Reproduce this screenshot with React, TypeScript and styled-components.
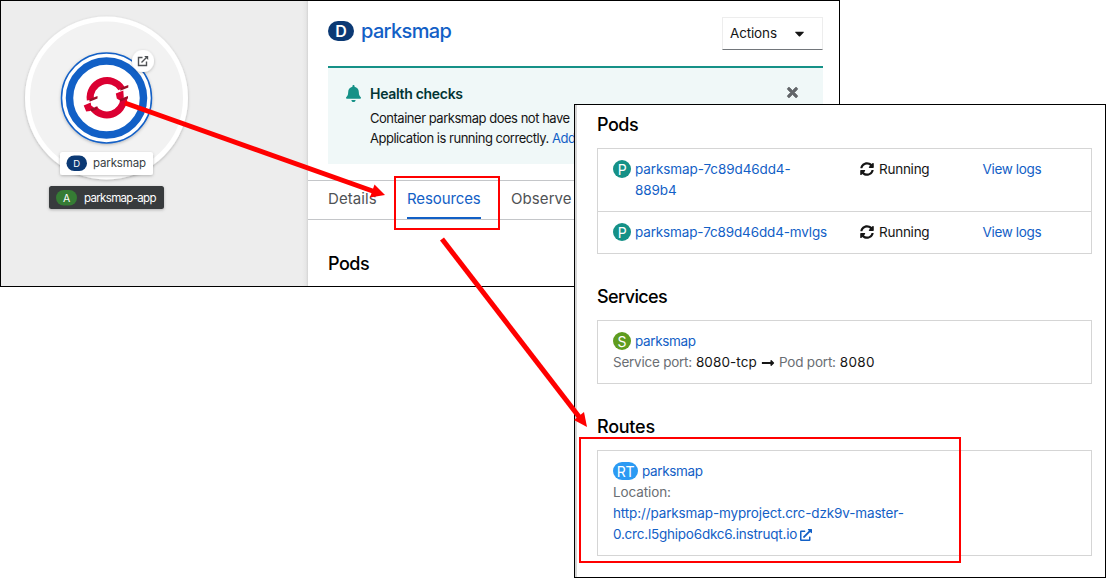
import React from 'react';
import styled, { createGlobalStyle } from 'styled-components';
import { FaBell, FaTimes, FaCaretDown, FaSyncAlt, FaLongArrowAltRight, FaExternalLinkAlt } from 'react-icons/fa';

const Global = createGlobalStyle`
  * { box-sizing: border-box; }
  body { margin: 0; background: #fff; overflow: hidden; }
  body, button { font-family: Inter, "Open Sans", "Liberation Sans", sans-serif; font-size: 13.5px; color: #151515; }
  a { color: #1260c6; text-decoration: none; }
`;

const Canvas = styled.main`
  position: relative;
  width: 1106px;
  height: 578px;
`;

const Window = styled.section<{ $x: number; $y: number; $w: number; $h: number }>`
  position: absolute;
  left: ${p => p.$x}px;
  top: ${p => p.$y}px;
  width: ${p => p.$w}px;
  height: ${p => p.$h}px;
  border: 1px solid #000;
  background: #fff;
  overflow: hidden;
  display: flex;
`;

const Topology = styled.div`
  flex: 0 0 307px;
  background: linear-gradient(to left, #d4d4d4 0, #e6e6e6 2px, #ededed 6px);
  display: flex;
`;

const Graph = styled.svg`
  display: block;
`;

const SidePanel = styled.div`
  flex: 1;
  display: flex;
  flex-direction: column;
  min-width: 0;
`;

const PanelHeader = styled.header`
  height: 65px;
  padding: 16px 16px 0 20px;
  display: flex;
  justify-content: space-between;
  align-items: flex-start;
`;

const PanelTitle = styled.h1`
  margin: 0;
  display: flex;
  align-items: center;
  gap: 7px;
  height: 28px;
  font-size: 20px;
  font-weight: 500;
  letter-spacing: -0.65px;
  color: #1260c6;
`;

const Kind = styled.span<{ $bg: string; $w: number; $h: number; $size: number; $bold?: boolean }>`
  flex: none;
  display: inline-flex;
  align-items: center;
  justify-content: center;
  width: ${p => p.$w}px;
  height: ${p => p.$h}px;
  border-radius: ${p => p.$h / 2}px;
  background: ${p => p.$bg};
  color: #fff;
  font-size: ${p => p.$size}px;
  font-weight: ${p => (p.$bold ? 600 : 400)};
  letter-spacing: -0.2px;
`;

const ActionsButton = styled.button`
  width: 101px;
  height: 33px;
  border: 1px solid #ededed;
  border-bottom-color: #72767b;
  background: #fff;
  padding: 0 15px 1px 7px;
  display: flex;
  align-items: center;
  justify-content: space-between;
  letter-spacing: -0.15px;
`;

const Alert = styled.div`
  margin: 0 16px 0 20px;
  height: 98px;
  border-top: 2px solid #159187;
  background: #f0f8f8;
  padding: 15px 23px 0 17px;
  display: flex;
  align-items: flex-start;
`;

const AlertIcon = styled.span`
  width: 25px;
  padding-top: 2px;
  color: #159187;
  display: flex;
`;

const AlertBody = styled.div`
  flex: 1;
  white-space: nowrap;
`;

const AlertTitle = styled.h2`
  margin: 0 0 4px;
  font-size: 14px;
  line-height: 21px;
  font-weight: 600;
  letter-spacing: -0.3px;
  color: #023534;
`;

const AlertText = styled.p`
  margin: 0;
  font-size: 13px;
  line-height: 20px;
  letter-spacing: -0.48px;
`;

const CloseIcon = styled.span`
  padding-top: 2px;
  color: #63666a;
  display: flex;
  svg { stroke: #63666a; stroke-width: 24px; }
`;

const Tabs = styled.nav`
  margin-top: 16px;
  height: 40px;
  border-top: 1px solid #c4c6c9;
  border-bottom: 1px solid #c4c6c9;
  padding-left: 20px;
  display: flex;
  gap: 30px;
`;

const Tab = styled.span<{ $active?: boolean; $w: number }>`
  width: ${p => p.$w}px;
  height: 38px;
  line-height: 35px;
  font-size: 15px;
  letter-spacing: ${p => (p.$active ? -0.1 : 0.08)}px;
  white-space: nowrap;
  color: ${p => (p.$active ? '#1260c6' : '#4f5255')};
  border-bottom: ${p => (p.$active ? '2px solid #1260c6' : '0')};
`;

const Heading = styled.h2<{ $top: number; $ls?: number }>`
  margin: ${p => p.$top}px 0 0;
  height: 24px;
  line-height: 24px;
  font-size: 18px;
  font-weight: 500;
  letter-spacing: ${p => p.$ls ?? -0.5}px;
  color: #000;
`;

const PanelSection = styled.div`
  padding-left: 20px;
`;

const Gutter = styled.div`
  flex: 0 0 2px;
  background: #d6d6d6;
`;

const Resources = styled.div`
  flex: 1;
  padding: 0 13px 0 20px;
`;

const List = styled.div<{ $top: number }>`
  margin-top: ${p => p.$top}px;
  border: 1px solid #d5d5d5;
`;

const PodRow = styled.div<{ $h: number }>`
  height: ${p => p.$h}px;
  padding: 10px 15px 0;
  line-height: 21px;
  display: grid;
  grid-template-columns: 247px 122.5px 1fr;
  & + & { border-top: 1px solid #d5d5d5; }
`;

const Item = styled.div<{ $h: number }>`
  height: ${p => p.$h}px;
  padding: 10px 15px 0;
  line-height: 21px;
  white-space: nowrap;
`;

const Named = styled.div<{ $gap?: number }>`
  display: flex;
  align-items: flex-start;
  gap: ${p => p.$gap ?? 4}px;
  ${Kind} { margin-top: 1px; }
`;

const Link = styled.a<{ $ls?: number }>`
  letter-spacing: ${p => p.$ls ?? -0.35}px;
`;

const Text = styled.span<{ $ls: number; $muted?: boolean }>`
  letter-spacing: ${p => p.$ls}px;
  color: ${p => (p.$muted ? '#6a6e73' : '#151515')};
`;

const Status = styled.span`
  display: flex;
  align-items: center;
  height: 21px;
  gap: 5px;
  svg { margin-bottom: 1px; }
`;

const PortLine = styled.div`
  display: flex;
  align-items: center;
  gap: 4px;
  height: 21px;
`;

const UrlEnd = styled.div`
  display: flex;
  align-items: center;
  gap: 3px;
  height: 21px;
  color: #1260c6;
`;

const Annotations = styled.svg`
  position: absolute;
  inset: 0;
  pointer-events: none;
`;

function TopologyGraph() {
  return (
    <Graph width="307" height="285" viewBox="1 1 307 285">
      <defs>
        <filter id="soft" x="-20%" y="-20%" width="140%" height="150%">
          <feDropShadow dx="0" dy="1" stdDeviation="1.5" floodOpacity="0.25" />
        </filter>
      </defs>
      <circle cx="106.5" cy="98" r="79" fill="#f2f2f2" stroke="#fff" strokeWidth="5" filter="url(#soft)" />
      <circle cx="106.5" cy="98" r="45" fill="#fff" stroke="#1260c6" strokeWidth="1.5" filter="url(#soft)" />
      <circle cx="106.5" cy="98" r="37" fill="#fff" stroke="#1260c6" strokeWidth="7.5" />
      <g fill="none" stroke="#db0032" strokeWidth="7">
        <path d="M90.300 100A17 17 0 0 1 121.500 88.500" />
        <path d="M123.800 98.500A17 17 0 0 1 93.500 108.500" />
      </g>
      <path fill="#db0032" d="M83.700 105.500l7-3 .5 3 4 3-5 2.500-4 .5zM115.800 93.500l7.500-3 .5 7-4 3-3-2z" />
      <path fill="#9c0d26" d="M89.500 99l8-3v2.500l-8 3.200zM90 109l8-2.500-1.500 3-5 2zM120.300 88l8-3v2.500l-8 3.200zM120 99l8-3v2.500l-8 3.200z" />
      <circle cx="143" cy="61" r="11" fill="#fff" filter="url(#soft)" />
      <g fill="none" stroke="#4f5255" strokeWidth="1.4">
        <path d="M142.500 57.500h-4v8h8v-4M141.500 62.500l5-5" />
      </g>
      <path d="M144.200 56h4v4z" fill="#4f5255" />
      <rect x="60" y="152" width="93" height="23" rx="2.500" fill="#fff" filter="url(#soft)" />
      <rect x="66.500" y="155.500" width="20.500" height="15.500" rx="7.750" fill="#0b3974" />
      <text x="76.700" y="167" fontSize="9.500" fill="#fff" textAnchor="middle">D</text>
      <text x="93" y="167" fontSize="11.500" fill="#393f44" textLength="53">parksmap</text>
      <rect x="49" y="186" width="115" height="23" rx="2.500" fill="#393b3d" filter="url(#soft)" />
      <rect x="56" y="190" width="21" height="15.500" rx="7.750" fill="#357c34" />
      <text x="66.500" y="202" fontSize="10.500" fill="#fff" textAnchor="middle">A</text>
      <text x="84" y="202" fontSize="11.500" fill="#fff" textLength="72.500">parksmap-app</text>
    </Graph>
  );
}

function PodStatus() {
  return (
    <Status>
      <FaSyncAlt size={14} color="#151515" />
      <Text $ls={-0.25}>Running</Text>
    </Status>
  );
}

export default function App() {
  return (
    <Canvas>
      <Global />
      <Window $x={0} $y={0} $w={840} $h={287}>
        <Topology><TopologyGraph /></Topology>
        <SidePanel>
          <PanelHeader>
            <PanelTitle><Kind $bg="#0b3974" $w={26} $h={20} $size={16} $bold>D</Kind>parksmap</PanelTitle>
            <ActionsButton>Actions<FaCaretDown size={15} /></ActionsButton>
          </PanelHeader>
          <Alert>
            <AlertIcon><FaBell size={17} /></AlertIcon>
            <AlertBody>
              <AlertTitle>Health checks</AlertTitle>
              <AlertText>Container parksmap does not have</AlertText>
              <AlertText>Application is running correctly. <a href="#add">Add</a></AlertText>
            </AlertBody>
            <CloseIcon><FaTimes size={15} /></CloseIcon>
          </Alert>
          <Tabs>
            <Tab $w={49}>Details</Tab>
            <Tab $w={74} $active>Resources</Tab>
            <Tab $w={60}>Observe</Tab>
          </Tabs>
          <PanelSection><Heading $top={32}>Pods</Heading></PanelSection>
        </SidePanel>
      </Window>

      <Window $x={574} $y={104} $w={532} $h={474}>
        <Gutter />
        <Resources>
          <Heading $top={8}>Pods</Heading>
          <List $top={11}>
            <PodRow $h={62}>
              <Named><Kind $bg="#159187" $w={18} $h={18} $size={14}>P</Kind><Link href="#pod1" $ls={-0.1}>parksmap-7c89d46dd4-<br />889b4</Link></Named>
              <PodStatus />
              <Link href="#logs1">View logs</Link>
            </PodRow>
            <PodRow $h={42}>
              <Named><Kind $bg="#159187" $w={18} $h={18} $size={14}>P</Kind><Link href="#pod2" $ls={-0.14}>parksmap-7c89d46dd4-mvlgs</Link></Named>
              <PodStatus />
              <Link href="#logs2">View logs</Link>
            </PodRow>
          </List>
          <Heading $top={31} $ls={-0.6}>Services</Heading>
          <List $top={11}>
            <Item $h={62}>
              <Named><Kind $bg="#5f9c1f" $w={18} $h={18} $size={14}>S</Kind><Link href="#service">parksmap</Link></Named>
              <PortLine>
                <Text $ls={-0.24} $muted>Service port:</Text><Text $ls={0.1}>8080-tcp</Text>
                <FaLongArrowAltRight size={14} />
                <Text $ls={-0.2} $muted>Pod port:</Text><Text $ls={0.35}>8080</Text>
              </PortLine>
            </Item>
          </List>
          <Heading $top={31} $ls={-0.25}>Routes</Heading>
          <List $top={11}>
            <Item $h={104}>
              <Named><Kind $bg="#2b9af3" $w={25} $h={18} $size={14}>RT</Kind><Link href="#route">parksmap</Link></Named>
              <Text $ls={-0.1} $muted>Location:</Text>
              <div><Link href="#url" $ls={-0.13}>http://parksmap-myproject.crc-dzk9v-master-</Link></div>
              <UrlEnd><Link href="#url" $ls={-0.22}>0.crc.l5ghipo6dkc6.instruqt.io</Link><FaExternalLinkAlt size={12} /></UrlEnd>
            </Item>
          </List>
        </Resources>
      </Window>

      <Annotations width="1106" height="578" viewBox="0 0 1106 578">
        <g fill="none" stroke="#f00" strokeWidth="2">
          <rect x="395" y="177" width="104" height="52" />
          <rect x="580" y="438" width="380" height="124" />
        </g>
        <g stroke="#f00" strokeWidth="5">
          <path d="M125 103L374 191.500" />
          <path d="M442 239L580 418" />
        </g>
        <g fill="#f00">
          <path d="M385 195L370 197.500L374.500 184.500Z" />
          <path d="M587 427L574 420L584 412Z" />
        </g>
      </Annotations>
    </Canvas>
  );
}
